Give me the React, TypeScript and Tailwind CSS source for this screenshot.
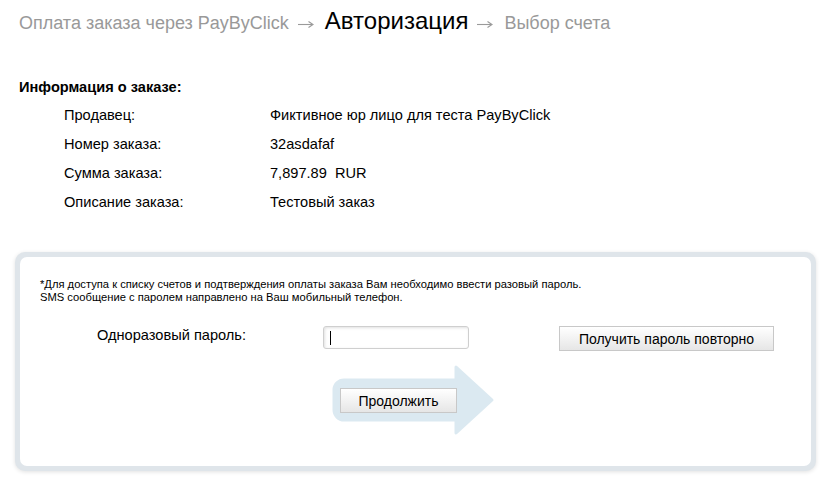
import React from "react";

const rows: [string, string][] = [
  ["Продавец:", "Фиктивное юр лицо для теста PayByClick"],
  ["Номер заказа:", "32asdafaf"],
  ["Сумма заказа:", "7,897.89\u00a0\u00a0RUR"],
  ["Описание заказа:", "Тестовый заказ"],
];

function Arrow({ className }: { className: string }) {
  return (
    <svg width="16" height="8" viewBox="0 0 16 8" className={className}>
      <path d="M0 4.5 H14" stroke="#9a9a9a" strokeWidth="1.1" />
      <path d="M10.5 1.5 L15 4.5 L10.5 7.5" fill="none" stroke="#9a9a9a" strokeWidth="1.1" />
    </svg>
  );
}

export default function App() {
  return (
    <div
      className="w-[837px] h-[494px] bg-white text-black overflow-hidden"
      style={{ fontFamily: '"Liberation Sans", Arial, sans-serif' }}
    >
      <div className="pl-[19px] pt-[3px] flex items-baseline h-[30px]">
        <span className="text-[18px] text-[#999999]">Оплата заказа через PayByClick</span>
        <Arrow className="relative -top-[1px] ml-[9px] mr-[11px]" />
        <span className="text-[24px] text-black">Авторизация</span>
        <Arrow className="relative -top-[1px] ml-[9px] mr-[11px]" />
        <span className="text-[18px] text-[#999999]">Выбор счета</span>
      </div>

      <div className="pl-[19px] pt-[49px]">
        <div className="text-[14.6px] font-bold leading-[16px]">Информация о заказе:</div>
        <div className="pl-[45px] pt-[12px] flex flex-col">
          {rows.map(([k, v]) => (
            <div key={k} className="flex text-[14.6px] leading-[16px] h-[29px]">
              <div className="w-[206px]">{k}</div>
              <div>{v}</div>
            </div>
          ))}
        </div>
      </div>

      <div className="ml-[15px] mt-[29px] w-[801px] h-[219px] rounded-[10px] bg-[#dfe5ea] p-[5px] shadow-[0_1px_4px_rgba(0,0,0,0.12)]">
        <div className="w-full h-full rounded-[7px] bg-white pl-[20px] pt-[21px]">
          <div className="text-[11.2px] leading-[13px]">
            <div>*Для доступа к списку счетов и подтверждения оплаты заказа Вам необходимо ввести разовый пароль.</div>
            <div>SMS сообщение с паролем направлено на Ваш мобильный телефон.</div>
          </div>

          <div className="flex items-start mt-[22px]">
            <div className="ml-[57px] w-[226px] text-[14.6px] leading-[16px] pt-[1px]">Одноразовый пароль:</div>
            <div className="w-[146px] h-[23px] rounded-[3px] border border-[#cfcfcf] bg-white shadow-[inset_1px_1px_3px_rgba(0,0,0,0.12)] flex items-center pl-[6px]">
              <div className="w-[1px] h-[14px] bg-black" />
            </div>
            <button className="ml-[90px] w-[215px] h-[25px] border border-[#c8c8c8] bg-gradient-to-b from-white to-[#e6e6e6] text-[14px] leading-[16px] text-black">
              Получить пароль повторно
            </button>
          </div>

          <div className="relative ml-[292px] mt-[13px] w-[164px] h-[72px]">
            <svg width="164" height="72" viewBox="0 0 164 72" className="absolute left-0 top-0">
              <path
                d="M12 16 H124 V3 L160 36 L124 69 V56 H12 A10 10 0 0 1 2 46 V26 A10 10 0 0 1 12 16 Z"
                fill="#dbe9f1"
                stroke="#dbe9f1"
                strokeWidth="3"
                strokeLinejoin="round"
              />
            </svg>
            <button className="absolute left-[8px] top-[24px] w-[117px] h-[25px] border border-[#c8c8c8] bg-gradient-to-b from-white to-[#e6e6e6] text-[14px] leading-[16px] text-black">
              Продолжить
            </button>
          </div>
        </div>
      </div>
    </div>
  );
}
